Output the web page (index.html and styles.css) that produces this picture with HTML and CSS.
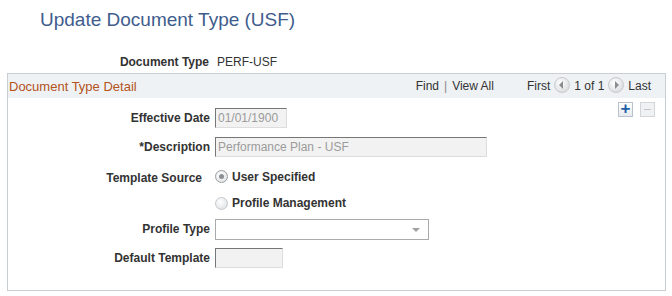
FILE: index.html
```html
<!DOCTYPE html>
<html lang="en">
<head>
  <title>Update Document Type (USF)</title>
  <meta charset="utf-8">
  <link rel="stylesheet" href="styles.css">
</head>
<body>
  <h1 class="page-title">Update Document Type (USF)</h1>

  <div class="key-row">
    <span class="label">Document Type</span>
    <span class="key-value">PERF-USF</span>
  </div>

  <div class="box">
    <div class="box-header">
      <span class="box-title">Document Type Detail</span>
      <div class="nav">
        <span>Find</span><span class="sep">|</span><span>View All</span>
        <span class="nav-first">First</span>
        <span class="nav-arrow nav-prev"></span>
        <span>1 of 1</span>
        <span class="nav-arrow nav-next"></span>
        <span>Last</span>
      </div>
    </div>

    <div class="row-buttons">
      <span class="row-btn add">+</span>
      <span class="row-btn remove"></span>
    </div>

    <div class="fields">
      <span class="label">Effective Date</span>
      <span class="field field-date">01/01/1900</span>

      <span class="label">*Description</span>
      <span class="field field-desc">Performance Plan - USF</span>

      <span class="label label-source">Template Source</span>
      <label class="radio-item"><span class="radio checked"></span>User Specified</label>

      <span></span>
      <label class="radio-item"><span class="radio"></span>Profile Management</label>

      <span class="label">Profile Type</span>
      <span class="select"><span class="caret"></span></span>

      <span class="label">Default Template</span>
      <span class="field field-template"></span>
    </div>
  </div>
</body>
</html>
```

FILE: styles.css
```css
*, *::before, *::after {
  margin: 0;
  padding: 0;
  box-sizing: border-box;
}

body {
  width: 672px;
  height: 296px;
  background-color: #ffffff;
  color: #333333;
  font-family: "Liberation Sans", Arial, sans-serif;
  font-size: 12px;
  overflow: hidden;
}

.page-title {
  padding: 8px 0 0 40px;
  height: 54px;
  color: #3f5d8d;
  font-size: 19px;
  font-weight: normal;
  line-height: 24px;
}

.label {
  color: #333333;
  font-weight: bold;
  text-align: right;
}

.key-row {
  display: flex;
  height: 19px;
  line-height: 16px;
}

.key-row .label {
  width: 209px;
}

.key-value {
  margin-left: 8px;
}

.box {
  margin-left: 7px;
  width: 659px;
  height: 218px;
  border: 1px solid #c9ced2;
}

.box-header {
  display: flex;
  align-items: center;
  justify-content: space-between;
  height: 24px;
  padding: 0 14px 0 1px;
  background-color: #eef2f4;
}

.box-title {
  color: #b5531c;
  font-size: 13px;
}

.nav {
  display: flex;
  align-items: center;
  gap: 4px;
}

.sep {
  margin: 0 1px;
  color: #888888;
}

.nav-first {
  margin-left: 29px;
}

.nav-arrow {
  position: relative;
  width: 16px;
  height: 16px;
  border-radius: 50%;
  background: radial-gradient(circle at 40% 35%, #ffffff, #d0d3d6);
  border: 1px solid #c8cbce;
  margin-top: -3px;
}

.nav-arrow::after {
  content: "";
  position: absolute;
  top: 3px;
  border-top: 4px solid transparent;
  border-bottom: 4px solid transparent;
}

.nav-prev::after {
  left: 4px;
  border-right: 4px solid #8a8d90;
}

.nav-next::after {
  left: 6px;
  border-left: 4px solid #8a8d90;
}

.row-buttons {
  display: flex;
  justify-content: flex-end;
  gap: 7px;
  padding: 4px 10px 0 0;
  height: 21px;
}

.row-btn {
  width: 15px;
  height: 15px;
  border: 1px solid #b9c2cc;
  background: linear-gradient(#ffffff, #e6eaee);
  color: #1f5fa8;
  font-size: 17px;
  font-weight: bold;
  line-height: 12px;
  text-align: center;
}

.row-btn.remove {
  position: relative;
  border-color: #d3d6d9;
  background: #f0f1f2;
}

.row-btn.remove::after {
  content: "";
  position: absolute;
  left: 3px;
  top: 6px;
  width: 7px;
  height: 1px;
  background-color: #c2c5c8;
}

.fields {
  display: grid;
  grid-template-columns: 202px auto;
  grid-template-rows: 29px 29px 31px 22px 30px 28px;
  column-gap: 5px;
  align-items: center;
  justify-items: start;
  margin-top: -16px;
}

.fields .label {
  justify-self: end;
}

.field {
  display: block;
  height: 20px;
  padding: 0 2px;
  border: 1px solid #dddddd;
  border-top-color: #767676;
  border-left-color: #767676;
  background-color: #f2f2f2;
  color: #9b9b9b;
  line-height: 18px;
}

.field-date {
  width: 72px;
}

.field-desc {
  width: 272px;
}

.field-template {
  width: 68px;
}

.label-source {
  padding-right: 8px;
  margin-top: 3px;
}

.radio-item {
  display: flex;
  align-items: center;
  color: #333333;
  font-weight: bold;
  line-height: 16px;
}

.radio {
  position: relative;
  width: 13px;
  height: 13px;
  margin-right: 4px;
  border-radius: 50%;
  border: 1px solid #c4c7ca;
  background: radial-gradient(circle at 40% 35%, #ffffff, #d9dcdf);
}

.radio.checked {
  border-color: #9a9da0;
}

.radio.checked::after {
  content: "";
  position: absolute;
  left: 3px;
  top: 3px;
  width: 5px;
  height: 5px;
  border-radius: 50%;
  background-color: #8c8f92;
}

.select {
  position: relative;
  display: block;
  width: 214px;
  height: 21px;
  border: 1px solid #aaaaaa;
  background-color: #ffffff;
}

.caret {
  position: absolute;
  right: 8px;
  top: 8px;
  border-left: 4px solid transparent;
  border-right: 4px solid transparent;
  border-top: 4px solid #a0a0a0;
}
```
